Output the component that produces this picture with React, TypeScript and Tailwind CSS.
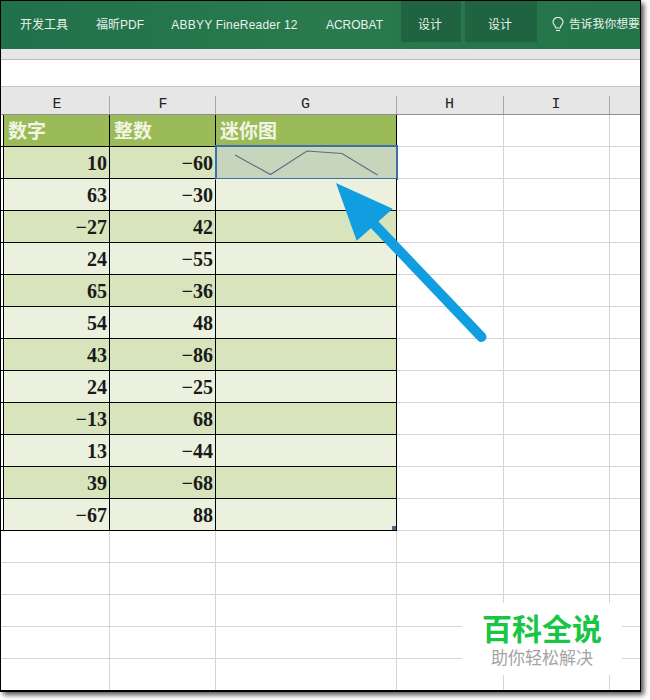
import React from "react";

const data: [string, string][] = [
  ["10", "−60"], ["63", "−30"], ["−27", "42"], ["24", "−55"], ["65", "−36"], ["54", "48"],
  ["43", "−86"], ["24", "−25"], ["−13", "68"], ["13", "−44"], ["39", "−68"], ["−67", "88"],
];
const gridCols = "grid grid-cols-[3px_106px_106px_181px_107px_106px_1fr] grid-rows-[32px]";
const cjk = "font-['Liberation_Sans','Noto_Sans_CJK_SC',sans-serif]";
const numCell = "border-r border-b border-black flex items-center justify-end pr-[2px] pt-[1px] font-['Liberation_Serif','Noto_Sans_CJK_SC',serif] font-bold text-[20px] leading-[24px] text-[#1a1a1a]";

function Tab({ children, className = "" }: { children: React.ReactNode; className?: string }) {
  return <div className={`shrink-0 flex items-center justify-center whitespace-nowrap text-[12px] text-[#e8f1ec] ${cjk} ${className}`}>{children}</div>;
}

function ColHead({ label, last = false, className = "" }: { label: string; last?: boolean; className?: string }) {
  return (
    <div className={`relative flex items-end justify-center font-['Liberation_Mono',monospace] text-[15px] leading-[18px] text-[#222] ${className}`}>
      {label}
      {!last && <span className="absolute right-0 bottom-0 h-[18px] w-px bg-[#a8a8a8]" />}
    </div>
  );
}

function Blank() {
  return (
    <div className={`${gridCols} h-8 shrink-0`}>
      <div className="border-b border-[#d4d4d4]" />
      <div className="border-r border-b border-[#d4d4d4]" />
      <div className="border-r border-b border-[#d4d4d4]" />
      <div className="border-r border-b border-[#d4d4d4]" />
      <div className="border-r border-b border-[#d4d4d4]" />
      <div className="border-r border-b border-[#d4d4d4]" />
      <div className="border-b border-[#d4d4d4]" />
    </div>
  );
}

export default function App() {
  return (
    <div className="w-[650px] h-[700px] bg-white relative overflow-hidden">
      <div className="relative w-[641px] h-[692px] border border-black border-b-2 overflow-hidden flex flex-col bg-white shadow-[3px_3px_5px_#555] box-border">
        {/* Ribbon tabs */}
        <div className="h-[48px] shrink-0 bg-gradient-to-r from-[#20714a] via-[#2a7a4e] to-[#257349] flex items-start overflow-hidden">
          <Tab className="w-[48px] ml-[19px] h-[48px]">开发工具</Tab>
          <Tab className="w-[46px] ml-[29px] h-[48px]">福昕PDF</Tab>
          <Tab className="w-[125px] ml-[29px] h-[48px] tracking-[0.2px]">ABBYY FineReader 12</Tab>
          <Tab className="w-[57px] ml-[29px] h-[48px]">ACROBAT</Tab>
          <Tab className="w-[60px] ml-[18px] h-[41px] pt-[6px] pr-[2px] bg-[#1f6340]">设计</Tab>
          <Tab className="w-[72px] ml-[4px] h-[41px] pt-[6px] pr-[2px] bg-[#1f6340]">设计</Tab>
          <div className="shrink-0 ml-[15px] h-[48px] flex items-center gap-[5px] whitespace-nowrap">
            <svg width="12" height="16" viewBox="0 0 12 16" fill="none" stroke="#e8f1ec" strokeWidth="1.1">
              <path d="M3.8 11 C3.6 8.8 1 7.8 1 5 A5 4.6 0 0 1 11 5 C11 7.8 8.4 8.8 8.2 11 Z" />
              <path d="M4 13.5 H8" />
            </svg>
            <span className={`text-[11.8px] text-[#e8f1ec] ${cjk}`}>告诉我你想要</span>
          </div>
        </div>
        <div className="h-[11px] shrink-0 bg-[#e6e6e6] border-b border-[#b9b9b9]" />
        <div className="h-[27px] shrink-0 bg-white border-b border-[#c4c4c4]" />
        {/* Column headers */}
        <div className="grid grid-cols-[3px_106px_106px_181px_107px_106px_1fr] h-[28px] shrink-0 bg-[#e6e6e6] border-b border-[#8f8f8f]">
          <div />
          <ColHead label="E" />
          <ColHead label="F" />
          <ColHead label="G" className="pr-[2px]" />
          <ColHead label="H" className="pr-[2px]" />
          <ColHead label="I" className="pr-[2px]" />
          <ColHead label="" last />
        </div>
        {/* Table header */}
        <div className={`${gridCols} h-8 shrink-0`}>
          <div className="border-r border-b border-black" />
          {["数字", "整数", "迷你图"].map((t) => (
            <div key={t} className="bg-[#9bbb59] border-r border-b border-black flex items-center pl-[4px] pb-[2px] text-[19px] leading-[24px] font-bold text-[#f2f5e4] font-['Noto_Sans_CJK_SC',sans-serif]">{t}</div>
          ))}
          <div className="border-r border-b border-[#d4d4d4]" />
          <div className="border-r border-b border-[#d4d4d4]" />
          <div className="border-b border-[#d4d4d4]" />
        </div>
        {/* Table rows */}
        {data.map(([a, b], i) => {
          const bg = i % 2 === 0 ? "bg-[#d8e4bc]" : "bg-[#ebf1de]";
          return (
            <div key={i} className={`${gridCols} h-8 shrink-0`}>
              <div className="border-r border-b border-black" />
              <div className={`${numCell} ${bg}`}>{a}</div>
              <div className={`${numCell} ${bg}`}>{b}</div>
              <div className={`relative border-r border-b border-black ${i === 0 ? "bg-[#c6d5bb]" : bg}`}>
                {i === 0 && (
                  <>
                    <svg className="absolute left-0 top-0" width="180" height="31" viewBox="0 0 180 31" fill="none" stroke="#566f85" strokeWidth="1.1">
                      <path d="M19 8 L54.5 27.5 L91 4 L126 6.5 L161.5 28" />
                    </svg>
                    <div className="absolute left-[-1px] top-[-2px] w-[183px] h-[35px] border-2 border-[#3f6fa8]" />
                  </>
                )}
                {i === data.length - 1 && <div className="absolute right-0 bottom-0 w-[4px] h-[4px] bg-[#4a6a8a]" />}
              </div>
              <div className="border-r border-b border-[#d4d4d4]" />
              <div className="border-r border-b border-[#d4d4d4]" />
              <div className="border-b border-[#d4d4d4]" />
            </div>
          );
        })}
        {/* Empty rows */}
        {[0, 1, 2, 3, 4].map((i) => <Blank key={i} />)}
      </div>

      {/* Arrow annotation */}
      <svg className="absolute left-0 top-0 pointer-events-none" width="650" height="700" fill="none">
        <path d="M481.5 337 L372 222" stroke="#109ee0" strokeWidth="10" strokeLinecap="round" />
        <path d="M336 183 L392.7 208.7 L356.7 240.7 Z" fill="#109ee0" />
      </svg>

      {/* Watermark */}
      <div className="absolute left-[462px] top-[603px] w-[160px] h-[72px] bg-white flex flex-col items-center font-['Noto_Sans_CJK_SC',sans-serif]">
        <div className="mt-[8px] text-[30px] leading-[32px] font-bold text-[#16c644] whitespace-nowrap">百科全说</div>
        <div className="mt-[3px] text-[17px] leading-[22px] text-[#a3a3a3] whitespace-nowrap">助你轻松解决</div>
      </div>
    </div>
  );
}
